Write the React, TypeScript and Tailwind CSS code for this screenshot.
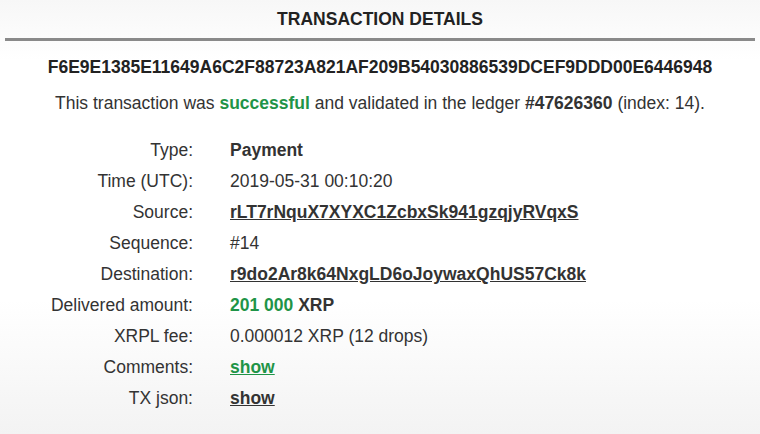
import React from "react";

const rows: { label: string; value: React.ReactNode }[] = [
  { label: "Type:", value: <b>Payment</b> },
  { label: "Time (UTC):", value: "2019-05-31 00:10:20" },
  { label: "Source:", value: <a className="font-bold underline">rLT7rNquX7XYXC1ZcbxSk941gzqjyRVqxS</a> },
  { label: "Sequence:", value: "#14" },
  { label: "Destination:", value: <a className="font-bold underline">r9do2Ar8k64NxgLD6oJoywaxQhUS57Ck8k</a> },
  {
    label: "Delivered amount:",
    value: (
      <span className="font-bold">
        <span className="text-[#1f9447]">201 000</span> XRP
      </span>
    ),
  },
  { label: "XRPL fee:", value: "0.000012 XRP (12 drops)" },
  { label: "Comments:", value: <a className="font-bold underline text-[#1f9447]">show</a> },
  { label: "TX json:", value: <a className="font-bold underline">show</a> },
];

export default function App() {
  return (
    <div
      className="w-[760px] h-[434px] overflow-hidden text-[17.5px] text-[#333] bg-[linear-gradient(180deg,#f7f7f7_0px,#ffffff_60px,#ffffff_300px,#f3f3f3_434px)]"
      style={{ fontFamily: '"Liberation Sans", Arial, sans-serif' }}
    >
      <div className="h-[38px] flex items-center justify-center font-bold text-[17.5px] text-[#222] pt-[1px]">
        TRANSACTION DETAILS
      </div>
      <div className="mx-[5px] h-[3px] bg-[#8a8a8a]" />
      <div className="mt-[16px] text-center font-bold text-[#222] leading-[20px]">
        F6E9E1385E11649A6C2F88723A821AF209B54030886539DCEF9DDD00E6446948
      </div>
      <div className="mt-[16px] text-center leading-[20px]">
        This transaction was <b className="text-[#1f9447]">successful</b> and validated in the ledger{" "}
        <b>#47626360</b> (index: 14).
      </div>
      <div className="mt-[22px] flex flex-col">
        {rows.map((r) => (
          <div key={r.label} className="flex h-[30.95px] items-center">
            <div className="w-[193px] text-right whitespace-nowrap">{r.label}</div>
            <div className="pl-[37px] whitespace-nowrap">{r.value}</div>
          </div>
        ))}
      </div>
    </div>
  );
}
